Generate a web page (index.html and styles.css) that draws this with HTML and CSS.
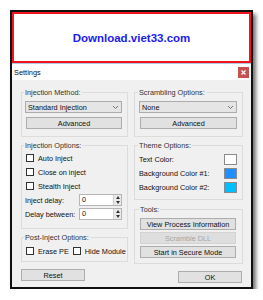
FILE: index.html
```html
<!DOCTYPE html>
<html lang="en">
  <head>
    <meta charset="UTF-8" />
    <title>Settings</title>
    <link rel="stylesheet" href="styles.css">
  </head>
  <body>
    <div id="wrap">
      <!-- banner -->
      <div class="banner">Download.viet33.com</div>

      <!-- title bar -->
      <div class="titlebar">
        <span>Settings</span>
        <span class="close">
          <svg width="5" height="5" viewBox="0 0 5 5"><path d="M0.5 0.5L4.5 4.5M4.5 0.5L0.5 4.5" stroke="#fff" stroke-width="1.2"/></svg>
        </span>
      </div>

      <div class="dlg">
        <!-- left column -->
        <div class="col left">
          <fieldset class="grp g-method">
            <legend>Injection Method:</legend>
            <div class="combo">Standard Injection
              <svg width="5" height="3" viewBox="0 0 5 3"><path d="M0 0L2.5 2.5L5 0" fill="none" stroke="#555" stroke-width="0.8"/></svg>
            </div>
            <div class="btn">Advanced</div>
          </fieldset>

          <fieldset class="grp g-opts">
            <legend>Injection Options:</legend>
            <div class="row"><span class="chk"></span>Auto Inject</div>
            <div class="row"><span class="chk"></span>Close on inject</div>
            <div class="row"><span class="chk"></span>Stealth Inject</div>
            <div class="row spinrow">
              <span>Inject delay:</span>
              <div class="spin"><span class="val">0</span>
                <span class="arrows">
                  <svg width="4" height="3" viewBox="0 0 4 3"><path d="M0 3L2 0L4 3Z" fill="#333"/></svg>
                  <svg width="4" height="3" viewBox="0 0 4 3"><path d="M0 0L2 3L4 0Z" fill="#333"/></svg>
                </span>
              </div>
            </div>
            <div class="row spinrow">
              <span>Delay between:</span>
              <div class="spin"><span class="val">0</span>
                <span class="arrows">
                  <svg width="4" height="3" viewBox="0 0 4 3"><path d="M0 3L2 0L4 3Z" fill="#333"/></svg>
                  <svg width="4" height="3" viewBox="0 0 4 3"><path d="M0 0L2 3L4 0Z" fill="#333"/></svg>
                </span>
              </div>
            </div>
          </fieldset>

          <fieldset class="grp g-post">
            <legend>Post-Inject Options:</legend>
            <div class="row">
              <span class="chk"></span><span>Erase PE</span>
              <span class="chk second"></span><span>Hide Module</span>
            </div>
          </fieldset>

          <div class="btn foot">Reset</div>
        </div>

        <!-- right column -->
        <div class="col right">
          <fieldset class="grp g-method">
            <legend>Scrambling Options:</legend>
            <div class="combo">None
              <svg width="5" height="3" viewBox="0 0 5 3"><path d="M0 0L2.5 2.5L5 0" fill="none" stroke="#555" stroke-width="0.8"/></svg>
            </div>
            <div class="btn">Advanced</div>
          </fieldset>

          <fieldset class="grp g-theme">
            <legend>Theme Options:</legend>
            <div class="row">Text Color:<span class="swatch white"></span></div>
            <div class="row">Background Color #1:<span class="swatch blue1"></span></div>
            <div class="row">Background Color #2:<span class="swatch blue2"></span></div>
          </fieldset>

          <fieldset class="grp g-tools">
            <legend>Tools:</legend>
            <div class="btn">View Process Information</div>
            <div class="btn off">Scramble DLL</div>
            <div class="btn">Start in Secure Mode</div>
          </fieldset>

          <div class="btn foot ok">OK</div>
        </div>
      </div>
    </div>
  </body>
</html>
```

FILE: styles.css
```css
html, body{
  margin: 0;
  padding: 0;
  background-color: #fff;
}

/* window frame */
#wrap{
  box-sizing: border-box;
  width: 243px;
  height: 279px;
  margin: 10px 0 0 10px;
  border: 2px solid #111;
  box-shadow: 3px 4px 4px rgba(0,0,0,.55);
  font-family: "Liberation Sans", Arial, sans-serif;
  font-size: 7.3px;
  color: #111;
  white-space: nowrap;
  display: flex;
  flex-direction: column;
}

.banner{
  box-sizing: border-box;
  height: 51px;
  border: 2px solid #f0141e;
  background-color: #fff;
  display: flex;
  align-items: center;
  justify-content: center;
  font: bold 11.5px "Liberation Sans", Arial, sans-serif;
  color: #1b1bf2;
}

.titlebar{
  box-sizing: border-box;
  height: 17px;
  border-top: 1px solid #b4c8e6;
  background-color: #fff;
  display: flex;
  align-items: center;
  justify-content: space-between;
  padding: 0 2px;
  font-size: 7.4px;
}

.close{
  width: 11px;
  height: 11px;
  background-color: #c75050;
  display: flex;
  align-items: center;
  justify-content: center;
}

/* dialog body */
.dlg{
  flex: 1;
  background-color: #f0f0f0;
  display: flex;
  gap: 6px;
  padding: 8px 8px 0 9px;
}

.col{
  display: flex;
  flex-direction: column;
}
.left{
  width: 107px;
}
.right{
  flex: 1;
}

/* group boxes */
.grp{
  margin: 0;
  min-width: 0;
  border: 1px solid #dcdcdc;
  padding: 4px 5px 7px 3px;
}
.grp legend{
  padding: 0 1px;
  margin-left: -1px;
  line-height: 9px;
  color: #333;
}
.right .grp{
  padding-left: 4px;
}

.g-opts, .g-post, .g-theme{
  margin-top: 4px;
}
.g-opts{
  padding-top: 1px;
}
.g-post{
  padding: 3px 5px 4px 3px;
}
.g-theme{
  padding-top: 2px;
  padding-bottom: 5px;
}
.g-tools{
  margin-top: 5px;
  padding: 2px 6px 5px 5px !important;
}

/* combo box */
.combo{
  box-sizing: border-box;
  height: 12px;
  background-color: #e5e5e5;
  border: 1px solid #acacac;
  display: flex;
  align-items: center;
  justify-content: space-between;
  padding: 0 3px 0 2px;
}

/* buttons */
.btn{
  box-sizing: border-box;
  height: 12px;
  margin-top: 4px;
  background-color: #e1e1e1;
  border: 1px solid #adadad;
  display: flex;
  align-items: center;
  justify-content: center;
}
.g-method .btn{
  margin-left: 1px;
}
.g-tools .btn{
  margin-top: 2px;
}
.btn.off{
  background-color: #dedede;
  border-color: #d3d3d3;
  color: #a6a6a6;
}
.foot{
  width: 64px;
  margin-top: 7px;
}
.ok{
  align-self: flex-end;
  margin-right: 1px;
}

/* rows */
.row{
  height: 14px;
  display: flex;
  align-items: center;
}
.g-post .row{
  height: 12px;
}
.g-theme .row{
  justify-content: space-between;
}

.chk{
  flex: none;
  box-sizing: border-box;
  width: 8px;
  height: 8px;
  border: 1px solid #333;
  background-color: #fff;
  margin: 0 4px 0 1px;
}
.chk.second{
  margin-left: 4px;
}

/* spin box */
.spinrow{
  justify-content: space-between;
}
.spin{
  box-sizing: border-box;
  width: 43px;
  height: 12px;
  background-color: #fff;
  border: 1px solid #b5b5b5;
  display: flex;
  justify-content: space-between;
}
.spin .val{
  padding-left: 2px;
  line-height: 10px;
}
.arrows{
  width: 7px;
  background-color: #eaeaea;
  border-left: 1px solid #d0d0d0;
  display: flex;
  flex-direction: column;
  align-items: center;
  justify-content: space-around;
}

/* colour swatches */
.swatch{
  flex: none;
  box-sizing: border-box;
  width: 13px;
  height: 11px;
  border: 1px solid #8a8a8a;
}
.white{
  background-color: #fff;
}
.blue1{
  background-color: #1e90ff;
}
.blue2{
  background-color: #00bfff;
}
```
